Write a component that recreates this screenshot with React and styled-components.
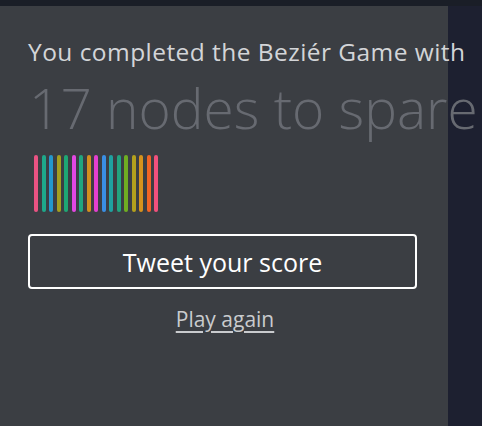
import React from 'react'
import styled, { createGlobalStyle } from 'styled-components'

const GlobalStyle = createGlobalStyle`
  html, body {
    margin: 0;
    padding: 0;
    background: #1d2030;
    font-family: "Open Sans", "Noto Sans", sans-serif;
  }
`

const nodeColors = [
  '#ea5383', '#1ea88a', '#2497cc', '#a39e1f', '#1ea774', '#e247e2',
  '#21a67f', '#d48f1e', '#e43fcf', '#3a8fe4', '#1fa2a0', '#22a37f',
  '#6fae22', '#b3a01d', '#d6921c', '#f06424', '#f1507d',
]

export default function App() {
  return (
    <>
      <GlobalStyle />
      <Screen>
        <TopStrip />
        <Row>
          <Panel>
            <Intro>You completed the Beziér Game with</Intro>
            <Score>17 nodes to spare</Score>
            <Nodes>
              {nodeColors.map((c, i) => (
                <Node key={i} color={c} />
              ))}
            </Nodes>
            <TweetButton>Tweet your score</TweetButton>
            <PlayAgain href="#">Play again</PlayAgain>
          </Panel>
          <Backdrop />
        </Row>
      </Screen>
    </>
  )
}

const Screen = styled.div`
  width: 482px;
  height: 426px;
  display: flex;
  flex-direction: column;
  overflow: hidden;
  background: #1d2030;
`
const TopStrip = styled.div`
  height: 6px;
  flex: none;
  background: #1a1e27;
`
const Row = styled.div`
  flex: 1;
  display: flex;
`
const Panel = styled.div`
  width: 448px;
  flex: none;
  background: #3b3e43;
  padding: 30px 0 0 28px;
  box-sizing: border-box;
  display: flex;
  flex-direction: column;
  align-items: flex-start;
  position: relative;
  z-index: 1;
`
const Backdrop = styled.div`
  flex: 1;
  background: #1d2030;
`
const Intro = styled.div`
  font-size: 24.5px;
  line-height: 32px;
  letter-spacing: 0.45px;
  color: #d3d5d8;
  white-space: nowrap;
`
const Score = styled.div`
  font-size: 55px;
  font-weight: 300;
  line-height: 60px;
  color: #676a71;
  white-space: nowrap;
  margin: 10px 0 0 1px;
`
const Nodes = styled.div`
  display: flex;
  gap: 3.5px;
  margin: 17px 0 0 6px;
`
const Node = styled.span`
  width: 4px;
  height: 57px;
  border-radius: 2px;
  background: ${p => p.color};
`
const TweetButton = styled.button`
  margin-top: 22px;
  width: 389px;
  height: 55px;
  border: 2px solid #ffffff;
  border-radius: 4px;
  background: transparent;
  color: #ffffff;
  font-family: inherit;
  font-size: 25px;
  cursor: pointer;
`
const PlayAgain = styled.a`
  align-self: center;
  margin: 16px 0 0 -26px;
  font-size: 21px;
  color: #c9cbce;
  text-decoration: underline;
  text-underline-offset: 4px;
`
